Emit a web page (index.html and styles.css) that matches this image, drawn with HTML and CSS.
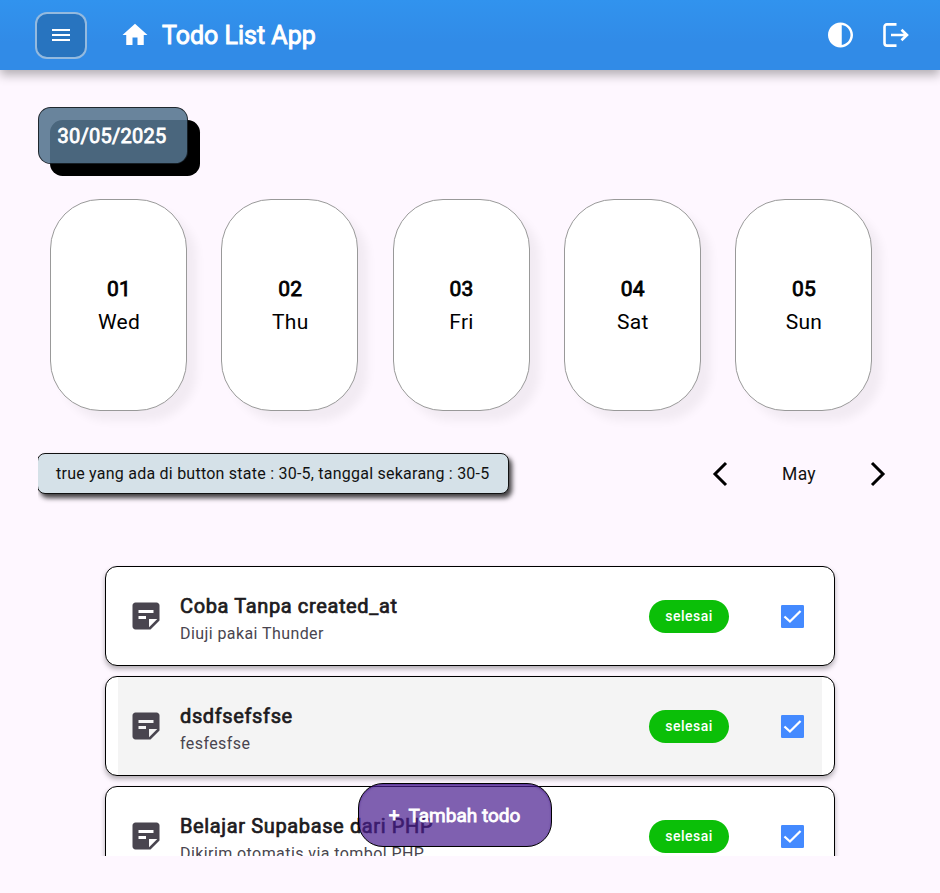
FILE: index.html
```html
<!DOCTYPE html>
<html lang="id">
<head>
<meta charset="utf-8">
<title>Todo List App</title>
<link rel="stylesheet" href="styles.css">
</head>
<body>
<svg width="0" height="0" class="defs" aria-hidden="true">
  <symbol id="note" viewBox="0 0 24 24"><path d="M19 3H4.99C3.89 3 3 3.9 3 5l.01 14c0 1.1.89 2 1.99 2h10l6-6V5c0-1.1-.9-2-2-2zM7 8h10v2H7V8zm5 6H7v-2h5v2zm2 5.500V14h5.500L14 19.500z"/></symbol>
  <symbol id="check" viewBox="0 0 18 18"><rect width="18" height="18" rx="1"/><path class="tick" d="M2.700 9 7 12.900 15.300 4.700"/></symbol>
</svg>
<header class="appbar">
  <button class="menu"><svg viewBox="0 0 24 24"><path d="M3 18h18v-2H3v2zm0-5h18v-2H3v2zm0-7v2h18V6H3z"/></svg></button>
  <svg class="icon home" viewBox="0 0 24 24"><path d="M10 20v-6h4v6h5v-8h3L12 3 2 12h3v8z"/></svg>
  <h1 class="title">Todo List App</h1>
  <svg class="icon contrast" viewBox="0 0 24 24"><path d="M12 22c5.520 0 10-4.480 10-10S17.520 2 12 2 2 6.480 2 12s4.480 10 10 10zm1-17.930c3.940.490 7 3.850 7 7.930s-3.050 7.440-7 7.930V4.070z"/></svg>
  <svg class="logout" viewBox="0 0 26 24"><path d="M13.500 1.400H4Q1.500 1.400 1.500 4V20Q1.500 22.600 4 22.600H13.500M8 12H24M18.500 6.700 24 12 18.500 17.300"/></svg>
</header>
<main class="page">
  <div class="date">30/05/2025</div>
  <section class="days">
    <div class="day"><b>01</b><span>Wed</span></div>
    <div class="day"><b>02</b><span>Thu</span></div>
    <div class="day"><b>03</b><span>Fri</span></div>
    <div class="day"><b>04</b><span>Sat</span></div>
    <div class="day"><b>05</b><span>Sun</span></div>
  </section>
  <section class="toolbar">
    <div class="clip"><div class="state">true yang ada di button state : 30-5, tanggal sekarang : 30-5</div></div>
    <div class="month">
      <svg viewBox="0 0 16 26"><path d="M14 2 3 13 14 24"/></svg>
      <span>May</span>
      <svg viewBox="0 0 16 26"><path d="M2 2 13 13 2 24"/></svg>
    </div>
  </section>
  <section class="list">
    <article class="todo"><div class="tile"><svg class="note"><use href="#note"/></svg><div class="text"><h2>Coba Tanpa created_at</h2><p>Diuji pakai Thunder</p></div><span class="chip">selesai</span><svg class="check"><use href="#check"/></svg></div></article>
    <article class="todo"><div class="tile hover"><svg class="note"><use href="#note"/></svg><div class="text"><h2>dsdfsefsfse</h2><p>fesfesfse</p></div><span class="chip">selesai</span><svg class="check"><use href="#check"/></svg></div></article>
    <article class="todo"><div class="tile"><svg class="note"><use href="#note"/></svg><div class="text"><h2>Belajar Supabase dari PHP</h2><p>Dikirim otomatis via tombol PHP</p></div><span class="chip">selesai</span><svg class="check"><use href="#check"/></svg></div></article>
  </section>
</main>
<button class="add">+&nbsp; Tambah todo</button>
</body>
</html>
```
FILE: styles.css
```css
* { box-sizing: border-box; }
body { margin: 0; height: 893px; overflow: hidden; background: #fef7ff; color: #000; font-family: Roboto, sans-serif; }
.defs { position: absolute; }
svg { display: block; flex: none; }
h1, h2, p { margin: 0; font-weight: 400; }
button { font-family: inherit; padding: 0; }

.appbar { height: 70px; display: flex; align-items: center; padding: 0 31px 0 35px; color: #fff; background: linear-gradient(#3193ee, #318be7 60%); box-shadow: 0 5px 10px rgba(0, 0, 0, .3); }
.menu { width: 52px; height: 47px; border: 2px solid rgba(255, 255, 255, .5); border-radius: 12px; background: #2874bf; display: grid; place-items: center; }
.menu svg { width: 24px; height: 24px; fill: #fff; }
.icon { width: 30px; height: 30px; fill: #fff; }
.home { margin-left: 33px; }
.title { margin-left: 12px; font-size: 25px; line-height: 32px; padding-top: 1px; flex: 1; -webkit-text-stroke: .9px #fff; }
.contrast { width: 31px; height: 30px; }
.logout { width: 26px; height: 24px; margin-left: 27px; fill: none; stroke: #fff; stroke-width: 2.600; }

.page { height: 823px; padding: 37px 38px; display: flex; flex-direction: column; }
.date { width: 150px; height: 57px; margin-left: -.5px; padding: 16px 0 0 20px; font-size: 20px; line-height: 26px; letter-spacing: .25px; color: #fff; -webkit-text-stroke: .8px #fff; position: relative; isolation: isolate; }
.date::before, .date::after { content: ""; position: absolute; border-radius: 12.500px; }
.date::before { z-index: -2; left: 12.500px; top: 13px; width: 149.500px; height: 56px; background: #000; }
.date::after { z-index: -1; inset: 0; border: 1px solid rgba(0, 0, 0, .7); background: rgba(84, 116, 142, .88); }

.days { display: flex; gap: 34.250px; margin: 35px 0 0 12px; }
.day { width: 137px; height: 212px; border: 1px solid #999; border-radius: 50px; background: #fff; box-shadow: 10px 10px 10px rgba(0, 0, 0, .05); display: flex; flex-direction: column; align-items: center; padding: 73px 0 0 1px; font-size: 21px; line-height: 32px; letter-spacing: .3px; gap: 1px; }
.day b { font-weight: 400; -webkit-text-stroke: .8px #000; }

.toolbar { display: flex; justify-content: space-between; align-items: center; height: 62px; margin: 32px 16px 0 0; }
.clip { overflow: hidden; padding: 10px 15px 12px 0; }
.state { width: 472px; height: 41px; margin-left: -1px; padding-left: 18px; border: 1px solid #111; border-radius: 8px; background: #d5e1e8; box-shadow: 3px 4px 5px rgba(0, 0, 0, .75); font-size: 16px; line-height: 39px; letter-spacing: .235px; color: #111; white-space: nowrap; }
.month { width: 174px; display: flex; align-items: center; justify-content: space-between; font-size: 17.500px; letter-spacing: .3px; color: #111; }
.month svg { width: 16px; height: 26px; fill: none; stroke: #000; stroke-width: 3; }

.list { flex: 1; margin-top: 51px; padding: 10px 67px 0; overflow: hidden; display: flex; flex-direction: column; gap: 10px; }
.todo { flex: none; height: 100px; padding: 0 12px; border: 1px solid #000; border-radius: 12px; background: #fff; box-shadow: 0 3px 5px rgba(0, 0, 0, .3); }
.tile { height: 98px; padding: 0 18px 0 9.500px; display: flex; align-items: center; }
.hover { background: #f4f4f4; }
.note { width: 36px; height: 36px; fill: #49454f; }
.text { margin-left: 16.500px; flex: 1; padding-top: 4px; white-space: nowrap; }
.text h2 { font-size: 20px; line-height: 30px; letter-spacing: .63px; color: #1d1b20; -webkit-text-stroke: .7px #1d1b20; }
.text p { font-size: 16px; line-height: 25px; letter-spacing: .42px; color: #49454f; }
.chip { width: 80px; height: 33px; border-radius: 17px; background: #0bbf08; color: #fff; font-size: 14px; font-weight: 500; line-height: 32px; letter-spacing: .5px; text-align: center; }
.check { width: 23px; height: 23px; margin-left: 52px; fill: #448aff; }
.tick { fill: none; stroke: #fff; stroke-width: 1.800; }

.add { position: absolute; left: 357.500px; top: 783px; width: 194px; height: 64px; border: 1px solid #000; border-radius: 25px; background: rgba(73, 29, 143, .7); color: #fff; font-size: 19px; -webkit-text-stroke: .8px #fff; box-shadow: inset 0 1px 2px rgba(50, 0, 130, .5); }
```
